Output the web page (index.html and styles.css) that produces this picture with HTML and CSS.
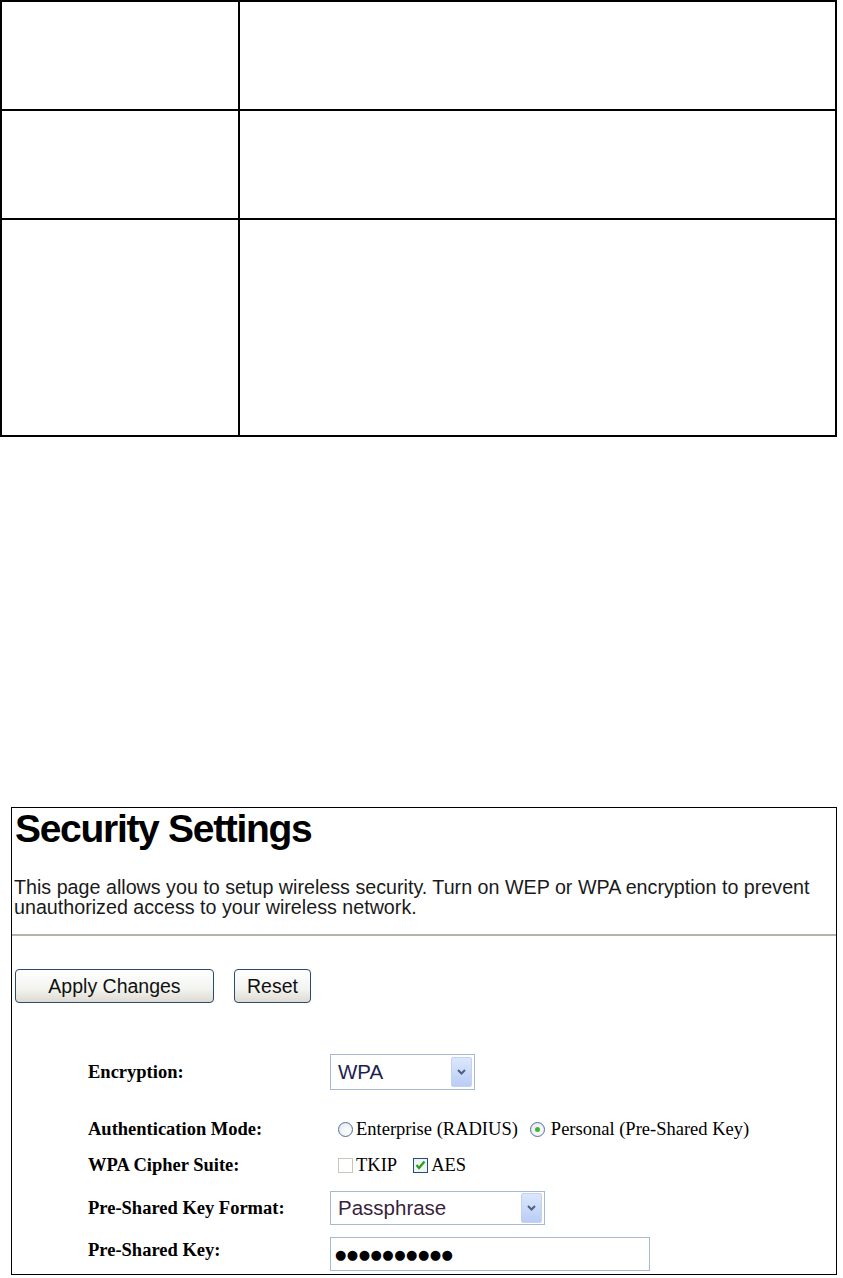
FILE: index.html
```html
<!DOCTYPE html>
<html lang="en">

<head>
    <meta charset="UTF-8">
    <meta name="viewport" content="width=device-width, initial-scale=1.0">
    <link rel="stylesheet" href="styles.css">
    <title>Security Settings</title>
</head>

<body>
    <!-- empty parameter table from the manual page -->
    <table class="param-table">
        <tr class="row-short">
            <td class="col-name"></td>
            <td class="col-desc"></td>
        </tr>
        <tr class="row-short">
            <td class="col-name"></td>
            <td class="col-desc"></td>
        </tr>
        <tr class="row-tall">
            <td class="col-name"></td>
            <td class="col-desc"></td>
        </tr>
    </table>

    <div class="screen">
        <h1>Security Settings</h1>
        <p class="intro">This page allows you to setup wireless security. Turn on WEP or WPA encryption to prevent
            unauthorized access to your wireless network.</p>
        <hr>

        <div class="buttons">
            <button type="button" class="btn btn-apply">Apply Changes</button>
            <button type="button" class="btn btn-reset">Reset</button>
        </div>

        <div class="settings">
            <div class="label row-enc">Encryption:</div>
            <div class="control row-enc">
                <div class="select select-enc">
                    <span class="select-value">WPA</span>
                    <span class="select-arrow">
                        <svg width="9" height="6" viewBox="0 0 9 6"><path d="M1 1 L4.5 4.5 L8 1" fill="none" stroke="#4d6185" stroke-width="2"/></svg>
                    </span>
                </div>
            </div>

            <div class="label row-auth">Authentication Mode:</div>
            <div class="control row-auth">
                <span class="radio"></span>
                <span class="opt">Enterprise (RADIUS)</span>
                <span class="radio checked"></span>
                <span class="opt">Personal (Pre-Shared Key)</span>
            </div>

            <div class="label row-cipher">WPA Cipher Suite:</div>
            <div class="control row-cipher">
                <span class="check disabled"></span>
                <span class="opt">TKIP</span>
                <span class="check checked">
                    <svg width="11" height="10" viewBox="0 0 11 10"><path d="M1.5 5 L4 8 L9.5 1.5" fill="none" stroke="#21a121" stroke-width="2.2"/></svg>
                </span>
                <span class="opt">AES</span>
            </div>

            <div class="label row-format">Pre-Shared Key Format:</div>
            <div class="control row-format">
                <div class="select select-format">
                    <span class="select-value">Passphrase</span>
                    <span class="select-arrow">
                        <svg width="9" height="6" viewBox="0 0 9 6"><path d="M1 1 L4.5 4.5 L8 1" fill="none" stroke="#4d6185" stroke-width="2"/></svg>
                    </span>
                </div>
            </div>

            <div class="label row-key">Pre-Shared Key:</div>
            <div class="control row-key">
                <div class="textbox">&#9679;&#9679;&#9679;&#9679;&#9679;&#9679;&#9679;&#9679;&#9679;&#9679;</div>
            </div>
        </div>
    </div>
</body>

</html>
```

FILE: styles.css
```css
body {
    margin: 0;
    padding: 0;
    background-color: #fff;
    font-family: 'Liberation Sans', Arial, sans-serif;
    color: #000;
}

.param-table {
    border-collapse: collapse;
    width: 837px;
}

.param-table td {
    border: 2px solid #000;
    padding: 0;
}

.col-name {
    width: 236px;
}

.row-short {
    height: 109px;
}

.row-tall {
    height: 217px;
}

.screen {
    margin: 370px 0 0 11px;
    width: 824px;
    height: 466px;
    border: 1px solid #000;
}

h1 {
    margin: 0 0 0 3px;
    font-size: 39px;
    line-height: 42px;
    letter-spacing: -1.3px;
    font-weight: bold;
}

.intro {
    margin: 27px 0 0 2px;
    font-size: 19.7px;
    line-height: 20px;
    color: #1a1a1a;
}

hr {
    margin: 17px 0 0 0;
    border: none;
    border-top: 2px solid #b4b4ac;
    height: 0;
}

.buttons {
    display: flex;
    gap: 20px;
    margin: 33px 0 0 3px;
}

.btn {
    height: 34px;
    border: 1px solid #2b4a6e;
    border-radius: 4px;
    background: linear-gradient(#ffffff, #f3f3ef 60%, #dcdad2);
    font-family: 'Liberation Sans', Arial, sans-serif;
    font-size: 19.5px;
    color: #111;
    padding: 0;
}

.btn-apply {
    width: 199px;
}

.btn-reset {
    width: 77px;
}

.settings {
    display: grid;
    grid-template-columns: 242px 1fr;
    grid-template-rows: 38px 56px 36px 43px 46px;
    margin: 50px 0 0 76px;
    font-family: 'Liberation Serif', 'Times New Roman', serif;
}

.label {
    font-weight: bold;
    font-size: 18.5px;
    display: flex;
    align-items: center;
}

.control {
    display: flex;
    align-items: center;
    font-size: 18.5px;
}

.row-auth {
    padding-top: 20px;
}

.row-format {
    padding-top: 7px;
}

.row-key {
    padding-top: 10px;
}

.row-key.label {
    padding-top: 2px;
}

.select {
    display: flex;
    align-items: center;
    justify-content: space-between;
    height: 34px;
    border: 1px solid #a5b9d2;
    box-sizing: border-box;
    padding: 0 2px 0 7px;
    font-family: 'Liberation Sans', Arial, sans-serif;
    font-size: 20.5px;
    background: #fff;
}

.select-enc {
    width: 145px;
    height: 36px;
}

.select-format {
    width: 215px;
}

.select-value {
    color: #1e1e50;
}

.select-format .select-value {
    color: #3a1f3d;
}

.select-arrow {
    width: 21px;
    height: 30px;
    display: flex;
    align-items: center;
    justify-content: center;
    background: linear-gradient(#dbe7fc, #b9cdf5);
    border: 1px solid #c2d3f2;
    border-radius: 2px;
    box-sizing: border-box;
}

.radio {
    width: 15px;
    height: 15px;
    border: 1px solid #536f95;
    border-radius: 50%;
    background: radial-gradient(circle at 60% 60%, #ffffff, #dfe4ea);
    box-sizing: border-box;
    margin: 0 3px 0 8px;
    display: flex;
    align-items: center;
    justify-content: center;
}

.radio.checked::after {
    content: "";
    width: 5px;
    height: 5px;
    border-radius: 50%;
    background: #3fb33f;
}

.radio.checked {
    margin: 0 6px 0 12px;
}

.check {
    width: 15px;
    height: 15px;
    box-sizing: border-box;
    border: 1px solid #1d4f87;
    background: #f3f3f3;
    margin: 0 3px 0 8px;
    display: flex;
    align-items: center;
    justify-content: center;
}

.check.disabled {
    border-color: #c9c7ba;
    background: #fff;
}

.check.checked {
    margin-left: 16px;
}

.textbox {
    width: 320px;
    height: 34px;
    box-sizing: border-box;
    border: 1px solid #a5b9d2;
    display: flex;
    align-items: center;
    padding-left: 4px;
    font-size: 13px;
    letter-spacing: 0.5px;
    font-family: 'DejaVu Sans', sans-serif;
}
```
